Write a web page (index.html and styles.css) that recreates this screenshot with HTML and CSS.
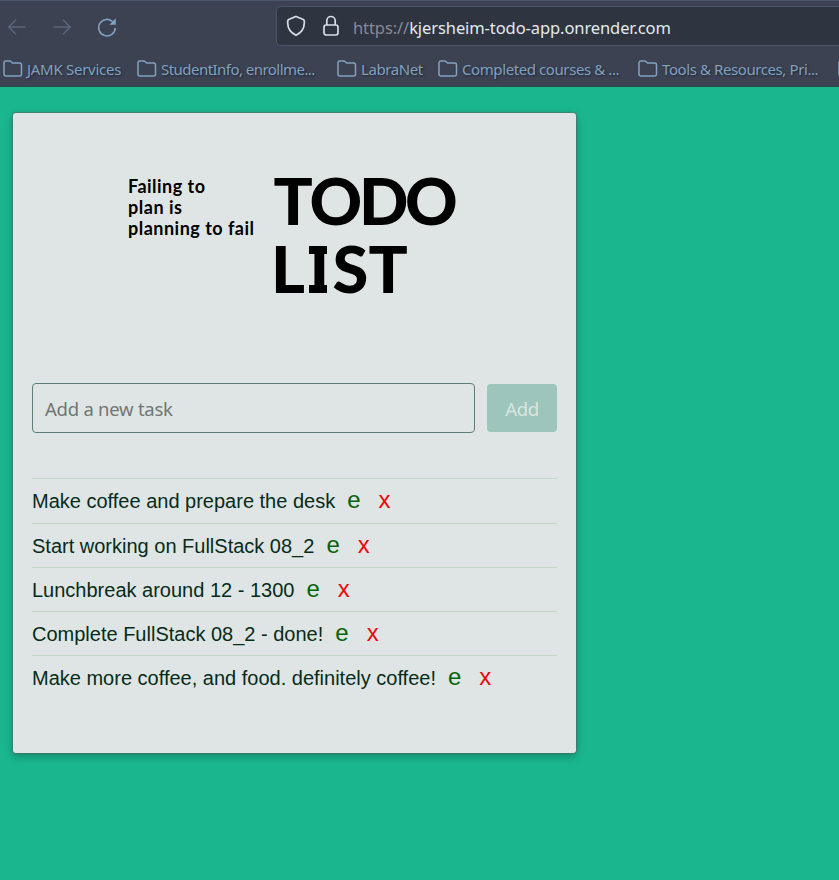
FILE: index.html
```html
<!DOCTYPE html>
<html lang="en">
<head>
<meta charset="utf-8">
<title>Todo List</title>
<link rel="stylesheet" href="styles.css">
</head>
<body>
<svg width="0" height="0" class="defs"><symbol id="folder" viewBox="0 0 20 18"><path d="M1 14V3q0-2 2-2h3.500q1 0 1.700.8L9.500 3H16.500q2 0 2 2v9q0 2-2 2H3q-2 0-2-2z" fill="none" stroke="currentColor" stroke-width="1.500"/></symbol></svg>
<header class="browser">
  <div class="toolbar">
    <nav class="nav">
      <svg class="dim" width="20" height="20" viewBox="0 0 20 20"><path d="M18.500 10H2M9 2.800L1.800 10L9 17.200"/></svg>
      <svg class="dim" width="20" height="20" viewBox="0 0 20 20"><path d="M1.500 10H18M11 2.800L18.200 10L11 17.200"/></svg>
      <svg width="20" height="20" viewBox="0 0 20 20"><path d="M15.800 4.700A8.300 8.300 0 1 0 18.300 11"/><path class="solid" d="M18.800 1.200V7.700H12.300z"/></svg>
    </nav>
    <div class="address">
      <svg width="20" height="22" viewBox="0 0 20 22"><path d="M10 1.500L16.800 4.200Q18.300 4.800 18.300 6.200V8C18.300 13.500 15.500 17.500 10 20.300C4.500 17.500 1.700 13.500 1.700 8V6.200Q1.700 4.800 3.200 4.200z"/></svg>
      <svg class="lock" width="18" height="22" viewBox="0 0 18 22"><rect x="2" y="10" width="14" height="10" rx="2.200"/><path d="M4.800 10V5.700a4.200 4.200 0 0 1 8.400 0v4.300"/></svg>
      <span class="url"><span>https://</span>kjersheim-todo-app.onrender.com</span>
    </div>
  </div>
  <div class="bookmarks">
    <div class="bookmark services"><svg width="20" height="18"><use href="#folder"/></svg><span>JAMK Services</span></div>
    <div class="bookmark wide student"><svg width="20" height="18"><use href="#folder"/></svg><span>StudentInfo, enrollme...</span></div>
    <div class="bookmark short"><svg width="20" height="18"><use href="#folder"/></svg><span>LabraNet</span></div>
    <div class="bookmark wide"><svg width="20" height="18"><use href="#folder"/></svg><span>Completed courses &amp; ...</span></div>
    <div class="bookmark wide"><svg width="20" height="18"><use href="#folder"/></svg><span>Tools &amp; Resources, Pri...</span></div>
    <div class="bookmark"><svg width="20" height="18"><use href="#folder"/></svg></div>
  </div>
</header>
<main class="card">
  <svg class="banner" width="525" height="150" viewBox="32 160 525 150">
    <g class="motto">
      <text x="128" y="192.500" textLength="77">Failing to</text>
      <text x="128" y="213.500" textLength="54">plan is</text>
      <text x="128" y="234.500" textLength="126">planning to fail</text>
    </g>
    <g class="title">
      <text y="225" x="273.500 309.500 359 405">TODO</text>
      <text y="293" x="271 309.500 332.500 368.500">LIST</text>
      <path d="M309 246h18v8h-18zM309 285h18v8h-18z"/>
    </g>
  </svg>
  <form class="entry">
    <input type="text" placeholder="Add a new task">
    <button type="button">Add</button>
  </form>
  <ul class="tasks">
    <li><span>Make coffee and prepare the desk</span><b>e</b><i>x</i></li>
    <li><span>Start working on FullStack 08_2</span><b>e</b><i>x</i></li>
    <li><span>Lunchbreak around 12 - 1300</span><b>e</b><i>x</i></li>
    <li><span>Complete FullStack 08_2 - done!</span><b>e</b><i>x</i></li>
    <li><span>Make more coffee, and food. definitely coffee!</span><b>e</b><i>x</i></li>
  </ul>
</main>
</body>
</html>
```
FILE: styles.css
```css
* { box-sizing: border-box; }
body {
  margin: 0;
  height: 880px;
  overflow: hidden;
  background: #1ab78f;
  font-family: "Liberation Sans", Arial, sans-serif;
}
.defs { display: block; }
.browser {
  height: 87px;
  background: #3c4252;
  border-top: 1px solid #4c566a;
  border-bottom: 1px solid #2a4a4c;
  overflow: hidden;
  font-family: "Noto Sans", sans-serif;
}
.toolbar { display: flex; height: 50px; padding-top: 5px; }
.nav { display: flex; width: 276px; padding: 11px 0 0 7px; gap: 25px; flex: none; }
.nav svg { stroke: #81a1c1; stroke-width: 1.600; fill: none; }
.nav .dim { stroke: #56657c; }
.nav .solid { fill: #81a1c1; stroke: none; }
.address {
  display: flex;
  align-items: center;
  flex: 1;
  height: 40px;
  padding-left: 9px;
  background: #2e3440;
  border: 1px solid #4c566a;
  border-right: 0;
  border-radius: 5px 0 0 5px;
}
.address svg { stroke: #d8dee9; stroke-width: 1.700; fill: none; flex: none; }
.address .lock { margin-left: 16px; }
.url { margin: 3px 0 0 13px; font-size: 16.500px; color: #e5e9f0; white-space: nowrap; letter-spacing: -.09px; }
.url span { color: #868b96; }
.bookmarks { display: flex; height: 36px; padding-left: 3px; }
.bookmark {
  display: flex;
  flex: none;
  width: 134px;
  padding-top: 9px;
  color: #81a1c1;
  font-size: 15px;
  line-height: 19px;
  letter-spacing: -.41px;
  white-space: nowrap;
  text-shadow: 1px 1px 2px #202633;
}
.bookmark span { margin-left: 4px; }
.bookmark.wide { width: 200px; }
.bookmark.short { width: 101px; }
.bookmark.services { letter-spacing: -.28px; }
.bookmark.student { letter-spacing: -.54px; }
.card {
  width: 563px;
  height: 640px;
  margin: 26px 0 0 13px;
  padding: 47px 19px 0;
  background: #dfe5e4;
  border-radius: 3px;
  box-shadow: 0 0 1px 1px rgba(90, 105, 100, .6), 0 3px 10px rgba(0, 0, 0, .3);
}
.banner { display: block; }
.motto { font: 700 18px Lato, sans-serif; }
.title { font: 900 65px Lato, sans-serif; }
.entry { display: flex; align-items: center; gap: 12px; margin-top: 73px; }
.entry input {
  width: 443px;
  height: 50px;
  padding: 0 12px;
  background: transparent;
  border: 1px solid #5c7f7c;
  border-radius: 4px;
  font: 18.500px "Noto Sans", sans-serif;
  letter-spacing: -.25px;
}
.entry input::placeholder { color: #717575; opacity: 1; }
.entry button {
  width: 70px;
  height: 48px;
  padding: 0;
  background: #9dc5bb;
  border: 0;
  border-radius: 4px;
  color: #d8e5e0;
  font: 18.500px "Noto Sans", sans-serif;
  letter-spacing: -.4px;
}
.tasks { list-style: none; margin: 45px 0 0; padding: 0; }
.tasks li {
  display: flex;
  align-items: baseline;
  height: 44.200px;
  padding-top: 7px;
  border-top: 1px solid #bfd8c8;
  color: #062b18;
  font-size: 20px;
  line-height: 28px;
}
.tasks li:first-child { height: 44.600px; }
.tasks b, .tasks i { font-style: normal; font-weight: 400; font-size: 24px; }
.tasks b { margin-left: 12px; color: #066306; }
.tasks i { margin-left: 18px; color: #ec0909; }
```
